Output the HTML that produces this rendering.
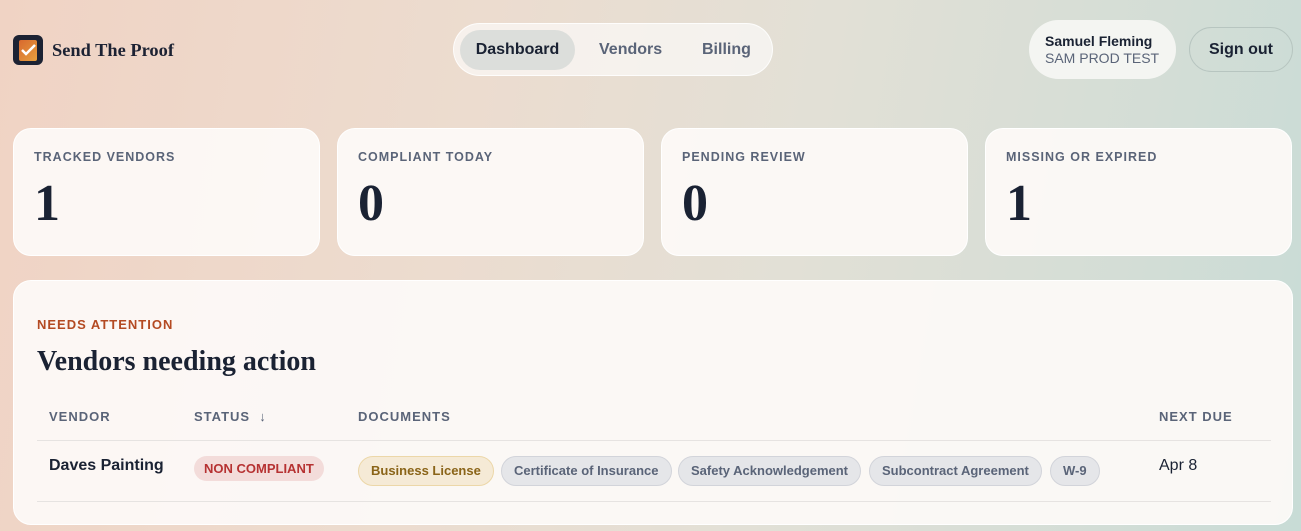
<!DOCTYPE html>
<html><head><style>
*{box-sizing:border-box;margin:0;padding:0}
body{width:1301px;height:531px;overflow:hidden;font-family:"Liberation Sans",sans-serif;color:#1a2233;
background:linear-gradient(100deg,#f0d3c4 0%,#ecdccf 35%,#e2e0d6 60%,#d3ddd6 85%,#c8dcd6 100%);position:relative}
.serif{font-family:"Liberation Serif",serif}
.logo{position:absolute;left:13px;top:35px;width:30px;height:30px;background:#1c2233;border-radius:6px}
.logo .doc{position:absolute;left:6px;top:5px;width:18px;height:21px;background:linear-gradient(135deg,#d8692e,#e6a03f);border-radius:2px}
.brand{position:absolute;left:52px;top:40px;font-size:18.4px;font-weight:bold;color:#1c2233}
.nav{position:absolute;left:453px;top:23px;width:320px;height:53px;background:rgba(255,255,255,.6);border:1px solid rgba(255,255,255,.8);border-radius:27px}
.nav span{position:absolute;top:17px;font-size:16px;font-weight:bold;color:#5a6478}
.nav .act{left:6px;top:6px;width:115px;height:40px;background:#dcdedb;border-radius:20px;color:#1a2233;text-align:center;line-height:40px}
.user{position:absolute;left:1029px;top:20px;width:147px;height:59px;background:#f4f5f2;border-radius:30px;padding:13px 0 0 16px;font-size:14px}
.user b{display:block}.user i{font-style:normal;color:#5a6478;display:block;margin-top:1px}
.so{position:absolute;left:1189px;top:27px;width:104px;height:45px;border:1px solid #b7c5c0;border-radius:23px;text-align:center;line-height:43px;font-weight:bold;font-size:16px}
.card{position:absolute;top:128px;width:307px;height:128px;background:rgba(253,250,248,.93);border:1px solid #fff;border-radius:18px;padding:21px 20px}
.card .l{font-size:12.5px;font-weight:bold;letter-spacing:1px;color:#5a6478}
.card .n{font-size:52px;font-weight:bold;margin-top:14px;line-height:1}
.panel{position:absolute;left:13px;top:280px;width:1280px;height:245px;background:rgba(252,249,247,.95);border:1px solid #fff;border-radius:18px}
.na{position:absolute;left:23px;top:36px;font-size:13px;font-weight:bold;letter-spacing:1px;color:#b44a22}
.h{position:absolute;left:23px;top:65px;font-size:28px;font-weight:bold}
.th{position:absolute;top:128px;font-size:13px;font-weight:bold;letter-spacing:1px;color:#5a6478}
.line{position:absolute;left:23px;width:1234px;height:1px;background:#e6e3e1}
.pill{position:absolute;top:175px;height:30px;border-radius:15px;font-size:13px;font-weight:bold;line-height:28px;padding:0 12px;background:#e5e6e9;border:1px solid #d2d4da;color:#5a6478}
</style></head><body>
<div class="logo"><div class="doc"></div><svg style="position:absolute;left:7px;top:8px" width="18" height="14"><path d="M2 7l4 4 9-9" stroke="#fff" stroke-width="2.5" fill="none"/></svg></div>
<div class="brand serif">Send The Proof</div>
<div class="nav"><span class="act">Dashboard</span><span style="left:145px">Vendors</span><span style="left:248px">Billing</span></div>
<div class="user"><b>Samuel Fleming</b><i>SAM PROD TEST</i></div>
<div class="so">Sign out</div>
<div class="card" style="left:13px"><div class="l">TRACKED VENDORS</div><div class="n serif">1</div></div>
<div class="card" style="left:337px"><div class="l">COMPLIANT TODAY</div><div class="n serif">0</div></div>
<div class="card" style="left:661px"><div class="l">PENDING REVIEW</div><div class="n serif">0</div></div>
<div class="card" style="left:985px"><div class="l">MISSING OR EXPIRED</div><div class="n serif">1</div></div>
<div class="panel">
<div class="na">NEEDS ATTENTION</div>
<div class="h serif">Vendors needing action</div>
<div class="th" style="left:35px">VENDOR</div>
<div class="th" style="left:180px">STATUS &nbsp;↓</div>
<div class="th" style="left:344px">DOCUMENTS</div>
<div class="th" style="left:1145px">NEXT DUE</div>
<div class="line" style="top:159px"></div>
<div style="position:absolute;left:35px;top:176px;font-size:16px;font-weight:bold">Daves Painting</div>
<div style="position:absolute;left:180px;top:175px;height:25px;border-radius:13px;background:#f3dcda;color:#b63232;font-size:13px;font-weight:bold;line-height:25px;padding:0 10px">NON COMPLIANT</div>
<div class="pill" style="left:344px;background:#f5ead6;border-color:#ecd7a8;color:#8a6418">Business License</div>
<div class="pill" style="left:487px">Certificate of Insurance</div>
<div class="pill" style="left:664px">Safety Acknowledgement</div>
<div class="pill" style="left:855px">Subcontract Agreement</div>
<div class="pill" style="left:1036px">W-9</div>
<div style="position:absolute;left:1145px;top:176px;font-size:16px">Apr 8</div>
<div class="line" style="top:220px"></div>
</div>
</body></html>
